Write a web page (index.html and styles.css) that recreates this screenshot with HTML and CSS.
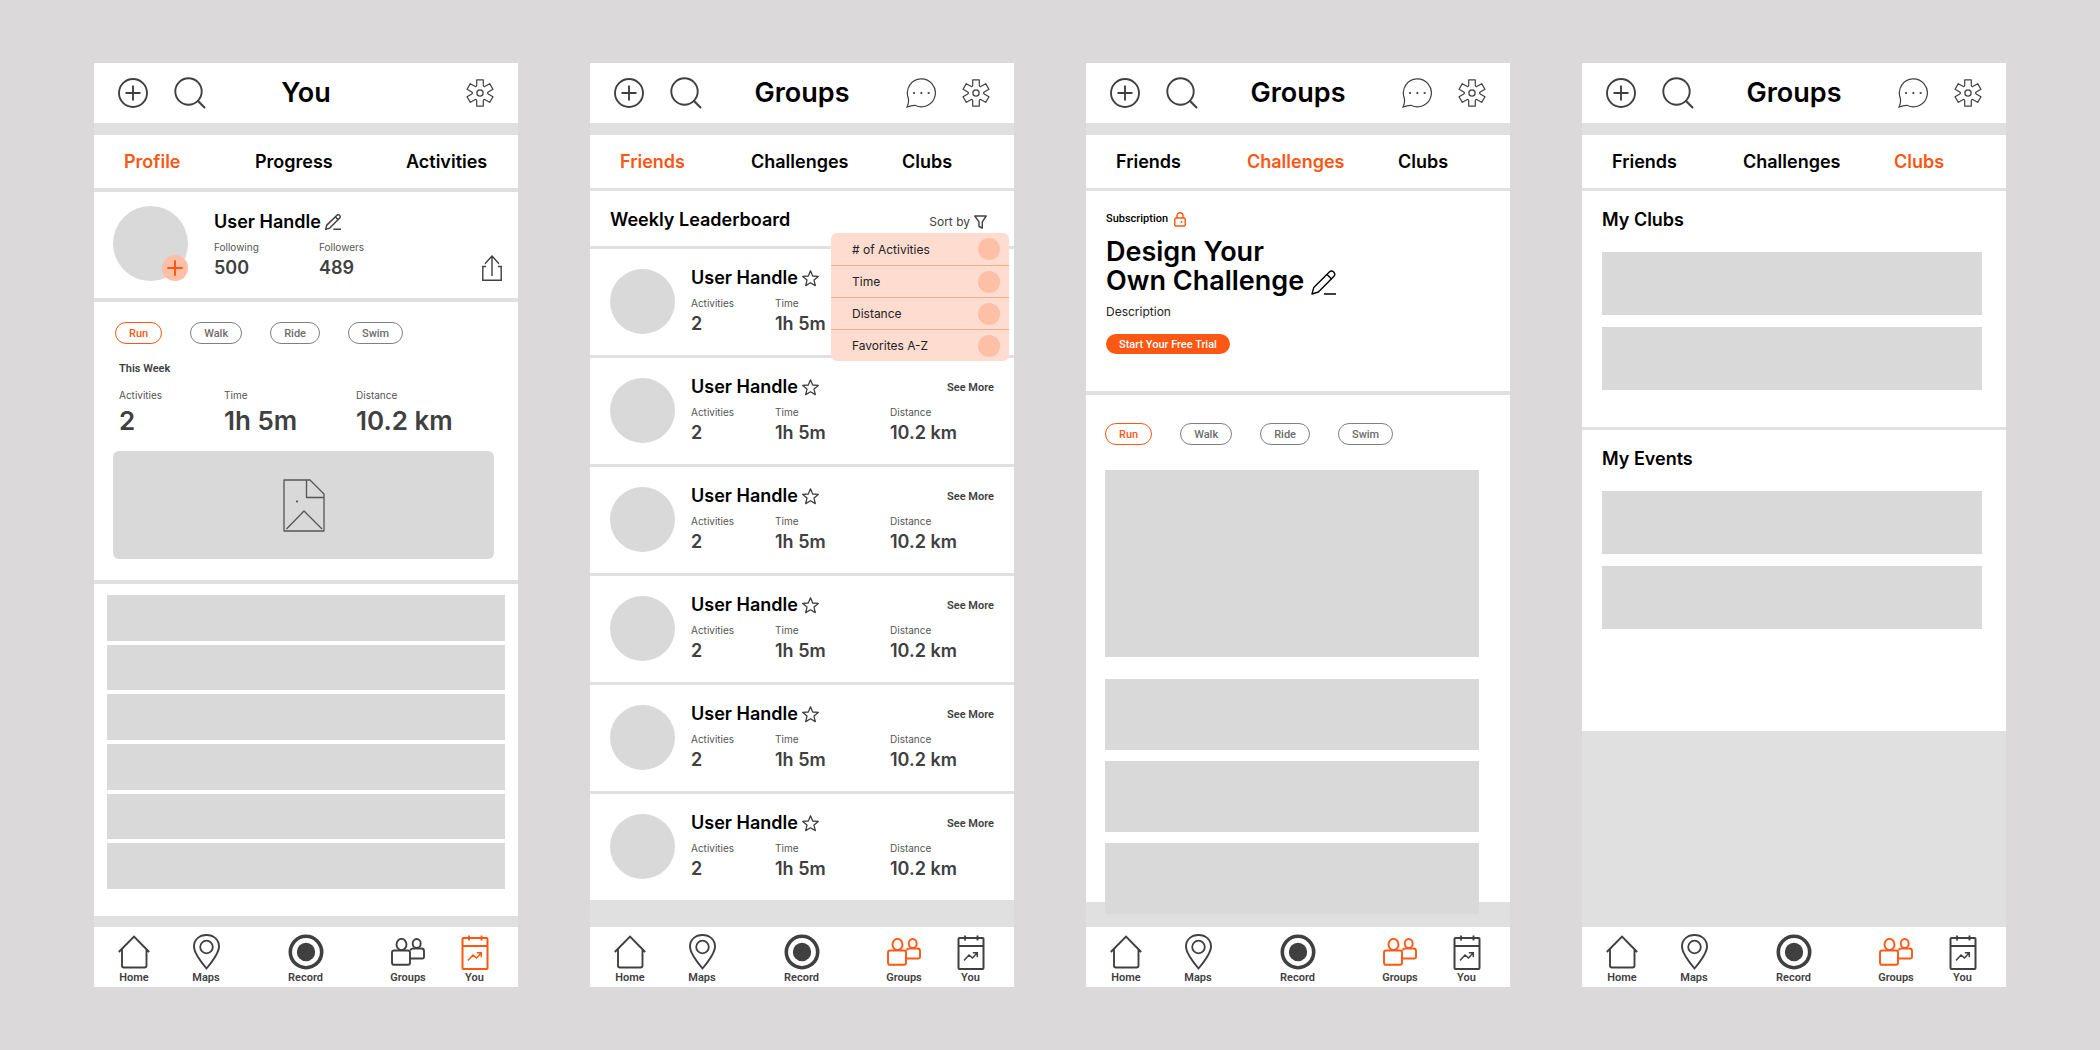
FILE: index.html
```html
<!DOCTYPE html>
<html lang="en">
  <head>
    <meta charset="UTF-8" />
    <meta name="viewport" content="width=device-width, initial-scale=1.0" />
    <title>Activity Tracker Screens</title>
    <link rel="stylesheet" href="styles.css">
  </head>
  <body>
    <!-- icon sprite -->
    <svg class="sprite" aria-hidden="true">
      <symbol id="i-add" viewBox="0 0 30 30">
        <circle cx="15" cy="15" r="14" stroke-width="1.9" />
        <path d="M15 7.5v15M7.5 15h15" stroke-width="1.9" />
      </symbol>
      <symbol id="i-search" viewBox="0 0 32 32">
        <circle cx="14.5" cy="14.5" r="13.2" stroke-width="1.9" />
        <path d="M23.5 23.5l7.5 7.5" stroke-width="2.1" />
      </symbol>
      <symbol id="i-chat" viewBox="0 0 30 30">
        <path d="M1 29Q3.5 24 2 19A14 14 0 1 1 9 27.3Q5 27.3 1 29Z" stroke-width="1.2" />
        <path d="M8 15h.1M15.3 15h.1M22.6 15h.1" stroke-width="2.2" stroke-linecap="round" />
      </symbol>
      <symbol id="i-gear" viewBox="-15 -15 30 30">
        <path d="M-3.5-14H3.5V-8.5Q3.7-6 6-7.4L10.4-10 13.9-4 9.2-1.3Q7 0 9.2 1.3L13.9 4 10.4 10 6 7.4Q3.7 6 3.5 8.5V14H-3.5V8.5Q-3.7 6-6 7.4L-10.4 10-13.9 4-9.2 1.3Q-7 0-9.2-1.3L-13.9-4-10.4-10-6-7.4Q-3.7-6-3.5-8.5Z" stroke-width="1.3" stroke-linejoin="round" />
        <circle r="3.3" stroke-width="1.4" />
      </symbol>
      <symbol id="i-edit" viewBox="0 0 25 25">
        <path d="M1 24l1.8-6.6L18.6 1.8a2.6 2.6 0 0 1 3.8 0l.6.6a2.6 2.6 0 0 1 0 3.8L7.4 22Z" stroke-linejoin="round" />
        <path d="M16 4.4l4.8 4.8M13 24h12" />
      </symbol>
      <symbol id="i-share" viewBox="0 0 20 26">
        <path d="M4 11.5H.8v13.8h18.4V11.5H16M10 21V1M3 8.7L10 1l7 7.7" stroke-width="1.4" />
      </symbol>
      <symbol id="i-image" viewBox="0 0 42 53">
        <path d="M1 1h26l14 14v37H1ZM23.5 1v17.5H41M3.5 50L21 32l18 18" stroke-width="1.3" stroke-linejoin="round" />
        <path d="M14 22.5h.1" stroke-width="2.2" stroke-linecap="round" />
      </symbol>
      <symbol id="i-star" viewBox="0 0 17 17">
        <path d="M8.5.8L10.7 6l5.6.4-4.3 3.7 1.3 5.5-4.8-2.9-4.8 2.9L5 10.1.7 6.4 6.3 6Z" stroke-width="1.3" stroke-linejoin="round" />
      </symbol>
      <symbol id="i-filter" viewBox="0 0 13 14">
        <path d="M.8 1h11.4L8.3 6.8V13L5 11.5V6.8Z" stroke-width="1.4" stroke-linejoin="round" />
      </symbol>
      <symbol id="i-lock" viewBox="0 0 12 15">
        <rect x=".8" y="6" width="10.4" height="8" rx="1" stroke-width="1.4" />
        <path d="M3 6V3.8a3 3 0 0 1 6 0V6" stroke-width="1.4" />
        <path d="M7.5 10h.1" stroke-width="1.8" stroke-linecap="round" />
      </symbol>
      <symbol id="i-home" viewBox="0 0 32 35">
        <path d="M.8 17L16 1.5 31.2 17M4 14v16.5q0 2 2 2h20.5q2 0 2-2V14" stroke-width="1.9" />
      </symbol>
      <symbol id="i-pin" viewBox="0 0 27 36">
        <path d="M13.5 34.5Q1 19.5 1 12.5C1 5.5 6.5 1 13.5 1S26 5.5 26 12.5q0 7-12.5 22Z" stroke-width="1.9" />
        <circle cx="13.5" cy="13" r="6.3" stroke-width="1.8" />
      </symbol>
      <symbol id="i-record" viewBox="0 0 36 36">
        <circle cx="18" cy="18" r="15.7" stroke-width="3.6" />
        <circle cx="18" cy="18" r="9.2" fill="currentColor" stroke="none" />
      </symbol>
      <symbol id="i-groups" viewBox="0 0 34 28">
        <ellipse cx="10.5" cy="6.5" rx="5" ry="5.6" stroke-width="1.9" />
        <ellipse cx="25.7" cy="5.5" rx="4" ry="4.5" stroke-width="1.9" />
        <rect x="1" y="12.5" width="18" height="14.3" rx="2" stroke-width="1.9" />
        <path d="M19 20.5h12.2q1.8 0 1.8-1.8v-5.7q0-2.5-2.5-2.5h-8.5q-2 0-2.7 2" stroke-width="1.9" />
      </symbol>
      <symbol id="i-you" viewBox="0 0 28 35">
        <rect x="1.5" y="3" width="25" height="31" rx="1" stroke-width="2" />
        <path d="M1.5 11h25M8 .5v5M20.5 .5v5" stroke-width="1.9" />
        <path d="M7 25.5l5-5.5 3.5 3 4.5-5M15.8 17.8h4.5v4.5" stroke-width="1.5" />
      </symbol>
    </svg>

    <main class="board">
      <!-- You / Profile -->
      <section class="phone">
        <header class="topbar">
          <div class="icons">
            <button aria-label="Add"><svg class="i30"><use href="#i-add" /></svg></button>
            <button aria-label="Search"><svg class="i32"><use href="#i-search" /></svg></button>
          </div>
          <h1>You</h1>
          <div class="icons right">
            <button aria-label="Settings"><svg class="i28"><use href="#i-gear" /></svg></button>
          </div>
        </header>
        <nav class="tabs">
          <a href="#" class="active">Profile</a>
          <a href="#">Progress</a>
          <a href="#">Activities</a>
        </nav>
        <div class="card profile thick">
          <div class="avatar big">
            <button class="badge" aria-label="Add photo">
              <svg viewBox="0 0 16 16"><path d="M8 1v14M1 8h14" stroke-width="1.9" stroke-linecap="round" /></svg>
            </button>
          </div>
          <div class="info">
            <h2>User Handle <svg class="edit-small"><use href="#i-edit" /></svg></h2>
            <div class="follow">
              <p class="stat"><span>Following</span><b>500</b></p>
              <p class="stat"><span>Followers</span><b>489</b></p>
            </div>
          </div>
          <button class="share" aria-label="Share"><svg><use href="#i-share" /></svg></button>
        </div>
        <div class="card week thick">
          <div class="pills">
            <button class="active">Run</button>
            <button>Walk</button>
            <button>Ride</button>
            <button>Swim</button>
          </div>
          <h3>This Week</h3>
          <div class="week-stats">
            <p class="stat large"><span>Activities</span><b>2</b></p>
            <p class="stat large"><span>Time</span><b>1h 5m</b></p>
            <p class="stat large"><span>Distance</span><b>10.2 km</b></p>
          </div>
          <div class="map"><svg><use href="#i-image" /></svg></div>
        </div>
        <div class="card feed thick">
          <div></div><div></div><div></div><div></div><div></div><div></div>
        </div>
        <nav class="bottom">
          <a href="#"><svg class="home"><use href="#i-home" /></svg>Home</a>
          <a href="#"><svg class="pin"><use href="#i-pin" /></svg>Maps</a>
          <a href="#"><svg class="rec"><use href="#i-record" /></svg>Record</a>
          <a href="#"><svg class="grp"><use href="#i-groups" /></svg>Groups</a>
          <a href="#" class="active"><svg class="you"><use href="#i-you" /></svg>You</a>
        </nav>
      </section>

      <!-- Groups / Friends -->
      <section class="phone">
        <header class="topbar">
          <div class="icons">
            <button aria-label="Add"><svg class="i30"><use href="#i-add" /></svg></button>
            <button aria-label="Search"><svg class="i32"><use href="#i-search" /></svg></button>
          </div>
          <h1>Groups</h1>
          <div class="icons right">
            <button aria-label="Messages"><svg class="i30"><use href="#i-chat" /></svg></button>
            <button aria-label="Settings"><svg class="i28"><use href="#i-gear" /></svg></button>
          </div>
        </header>
        <nav class="tabs">
          <a href="#" class="active">Friends</a>
          <a href="#">Challenges</a>
          <a href="#">Clubs</a>
        </nav>
        <div class="card leader-title">
          <h2>Weekly Leaderboard</h2>
          <button class="sort">Sort by <svg><use href="#i-filter" /></svg></button>
          <div class="sort-menu">
            <label># of Activities <input type="radio" name="sort" /></label>
            <label>Time <input type="radio" name="sort" /></label>
            <label>Distance <input type="radio" name="sort" /></label>
            <label>Favorites A-Z <input type="radio" name="sort" /></label>
          </div>
        </div>
        <div id="leaderboard"></div>
        <nav class="bottom">
          <a href="#"><svg class="home"><use href="#i-home" /></svg>Home</a>
          <a href="#"><svg class="pin"><use href="#i-pin" /></svg>Maps</a>
          <a href="#"><svg class="rec"><use href="#i-record" /></svg>Record</a>
          <a href="#" class="active"><svg class="grp"><use href="#i-groups" /></svg>Groups</a>
          <a href="#"><svg class="you"><use href="#i-you" /></svg>You</a>
        </nav>
      </section>

      <!-- Groups / Challenges -->
      <section class="phone">
        <header class="topbar">
          <div class="icons">
            <button aria-label="Add"><svg class="i30"><use href="#i-add" /></svg></button>
            <button aria-label="Search"><svg class="i32"><use href="#i-search" /></svg></button>
          </div>
          <h1>Groups</h1>
          <div class="icons right">
            <button aria-label="Messages"><svg class="i30"><use href="#i-chat" /></svg></button>
            <button aria-label="Settings"><svg class="i28"><use href="#i-gear" /></svg></button>
          </div>
        </header>
        <nav class="tabs">
          <a href="#">Friends</a>
          <a href="#" class="active">Challenges</a>
          <a href="#">Clubs</a>
        </nav>
        <div class="card promo">
          <p class="subscription">Subscription <svg><use href="#i-lock" /></svg></p>
          <h2>Design Your<br />Own Challenge <svg><use href="#i-edit" /></svg></h2>
          <p class="description">Description</p>
          <button class="trial">Start Your Free Trial</button>
        </div>
        <div class="card challenges thick">
          <div class="pills">
            <button class="active">Run</button>
            <button>Walk</button>
            <button>Ride</button>
            <button>Swim</button>
          </div>
          <div class="block hero"></div>
          <div class="block"></div>
          <div class="block"></div>
          <div class="block"></div>
        </div>
        <nav class="bottom">
          <a href="#"><svg class="home"><use href="#i-home" /></svg>Home</a>
          <a href="#"><svg class="pin"><use href="#i-pin" /></svg>Maps</a>
          <a href="#"><svg class="rec"><use href="#i-record" /></svg>Record</a>
          <a href="#" class="active"><svg class="grp"><use href="#i-groups" /></svg>Groups</a>
          <a href="#"><svg class="you"><use href="#i-you" /></svg>You</a>
        </nav>
      </section>

      <!-- Groups / Clubs -->
      <section class="phone">
        <header class="topbar">
          <div class="icons">
            <button aria-label="Add"><svg class="i30"><use href="#i-add" /></svg></button>
            <button aria-label="Search"><svg class="i32"><use href="#i-search" /></svg></button>
          </div>
          <h1>Groups</h1>
          <div class="icons right">
            <button aria-label="Messages"><svg class="i30"><use href="#i-chat" /></svg></button>
            <button aria-label="Settings"><svg class="i28"><use href="#i-gear" /></svg></button>
          </div>
        </header>
        <nav class="tabs">
          <a href="#">Friends</a>
          <a href="#">Challenges</a>
          <a href="#" class="active">Clubs</a>
        </nav>
        <div class="card clubs">
          <h2>My Clubs</h2>
          <div class="block"></div>
          <div class="block"></div>
        </div>
        <div class="card clubs events">
          <h2>My Events</h2>
          <div class="block"></div>
          <div class="block"></div>
        </div>
        <nav class="bottom">
          <a href="#"><svg class="home"><use href="#i-home" /></svg>Home</a>
          <a href="#"><svg class="pin"><use href="#i-pin" /></svg>Maps</a>
          <a href="#"><svg class="rec"><use href="#i-record" /></svg>Record</a>
          <a href="#" class="active"><svg class="grp"><use href="#i-groups" /></svg>Groups</a>
          <a href="#"><svg class="you"><use href="#i-you" /></svg>You</a>
        </nav>
      </section>
    </main>

    <script>
      const friends = Array.from({ length: 6 }, () => ({
        name: "User Handle",
        activities: "2",
        time: "1h 5m",
        distance: "10.2 km",
      }));

      const board = document.getElementById("leaderboard");

      friends.forEach((f) => {
        const row = document.createElement("div");
        row.className = "card friend";
        row.innerHTML = `
          <div class="avatar"></div>
          <div class="info">
            <div class="name-row">
              <h2>${f.name} <svg class="star"><use href="#i-star" /></svg></h2>
              <a href="#">See More</a>
            </div>
            <div class="friend-stats">
              <p class="stat"><span>Activities</span><b>${f.activities}</b></p>
              <p class="stat"><span>Time</span><b>${f.time}</b></p>
              <p class="stat"><span>Distance</span><b>${f.distance}</b></p>
            </div>
          </div>`;
        board.appendChild(row);
      });
    </script>
  </body>
</html>
```

FILE: styles.css
```css
* {
  box-sizing: border-box;
}
body {
  margin: 0;
  background: #dcd9da;
  font-family: "Inter", sans-serif;
  color: #000;
}
h1,
h2,
h3,
p {
  margin: 0;
}
a {
  color: inherit;
  text-decoration: none;
}
button {
  padding: 0;
  border: none;
  background: none;
  font-family: inherit;
  color: inherit;
  cursor: pointer;
}
svg {
  display: block;
  fill: none;
  stroke: currentColor;
}
.sprite {
  position: absolute;
  width: 0;
  height: 0;
}

/* screens */
.board {
  display: grid;
  grid-template-columns: repeat(4, 1fr);
  gap: 72px;
  padding: 63px 94px;
}
.phone {
  display: flex;
  flex-direction: column;
  min-height: calc(100vh - 126px);
  background: #e0e0e0;
}
.card {
  background: #fff;
  margin-top: 3px;
}
.card.thick {
  margin-top: 4px;
}
h2 {
  display: flex;
  align-items: center;
  gap: 4px;
  font-size: 18px;
  line-height: 24px;
  font-weight: 600;
}

/* top bar */
.topbar {
  display: grid;
  grid-template-columns: 1fr auto 1fr;
  align-items: center;
  height: 60px;
  padding: 0 24px;
  background: #fff;
}
.topbar h1 {
  font-size: 27px;
  line-height: 32px;
  font-weight: 600;
}
.icons {
  display: flex;
  align-items: center;
  gap: 26px;
  color: #404041;
}
.icons.right {
  justify-content: flex-end;
}
.i28 {
  width: 28px;
  height: 30px;
}
.i30 {
  width: 30px;
  height: 30px;
}
.i32 {
  width: 32px;
  height: 32px;
}
.tabs {
  display: grid;
  grid-template-columns: 131fr 151fr 112fr;
  align-items: center;
  height: 53px;
  margin-top: 12px;
  padding-left: 30px;
  background: #fff;
  font-size: 18px;
  line-height: 24px;
  font-weight: 600;
}
.tabs .active {
  color: #fc5713;
}

/* avatar, name and numbers */
.avatar {
  flex: none;
  width: 65px;
  height: 65px;
  border-radius: 50%;
  background: #d9d9d9;
}
.avatar.big {
  position: relative;
  width: 75px;
  height: 75px;
}
.badge {
  position: absolute;
  right: 0;
  bottom: 0;
  display: grid;
  place-items: center;
  width: 26px;
  height: 26px;
  border-radius: 50%;
  background: #ffbea6;
  color: #fc5713;
}
.badge svg {
  width: 16px;
  height: 16px;
}
.info {
  flex: 1;
}
.stat {
  color: #404041;
}
.stat span,
.stat b {
  display: block;
}
.stat span {
  font-size: 10px;
  line-height: 14px;
  color: #555;
}
.stat b {
  margin-top: 2px;
  font-size: 18px;
  line-height: 24px;
  font-weight: 600;
}
.stat.large b {
  font-size: 26px;
  line-height: 34px;
}

/* profile */
.profile {
  display: flex;
  gap: 26px;
  padding: 14px 16px 0 19px;
  height: 106px;
}
.profile .info {
  padding-top: 4px;
}
.edit-small {
  width: 16px;
  height: 16px;
  stroke-width: 2.3;
  color: #404041;
}
.follow {
  display: grid;
  grid-template-columns: 105fr 137fr;
  margin-top: 6px;
}
.profile .share {
  align-self: flex-end;
  margin-bottom: 17px;
  color: #404041;
}
.share svg {
  width: 20px;
  height: 26px;
}
.pills {
  display: flex;
  gap: 28px;
}
.pills button {
  height: 22px;
  padding: 0 13px;
  border: 1px solid #808080;
  border-radius: 11px;
  font-family: "Roboto", sans-serif;
  font-size: 11px;
  font-weight: 500;
  color: #6d6d6d;
}
.pills .active {
  border-color: #fc5713;
  color: #fc5713;
}
.week {
  padding: 20px 24px 21px 19px;
}
.week .pills {
  padding-left: 2px;
}
.week h3 {
  margin: 17px 0 11px 6px;
  font-family: "Roboto", sans-serif;
  font-size: 11px;
  line-height: 16px;
  font-weight: 600;
  color: #404041;
}
.week-stats {
  display: grid;
  grid-template-columns: 105fr 132fr 138fr;
  padding-left: 6px;
}
.map {
  display: grid;
  place-items: center;
  height: 108px;
  margin-top: 13px;
  border-radius: 6px;
  background: #d9d9d9;
  color: #555;
}
.map svg {
  width: 42px;
  height: 53px;
}
.feed {
  display: grid;
  grid-template-rows: repeat(6, 1fr);
  gap: 4px;
  height: 332px;
  padding: 11px 13px 27px;
}
.feed div {
  background: #d9d9d9;
}

/* leaderboard */
.leader-title {
  position: relative;
  display: flex;
  justify-content: space-between;
  align-items: flex-start;
  height: 55px;
  padding: 17px 27px 0 20px;
}
.sort {
  display: flex;
  align-items: center;
  gap: 4px;
  padding-top: 4px;
  font-size: 12px;
  line-height: 20px;
  color: #404041;
}
.sort svg {
  width: 13px;
  height: 14px;
}
.sort-menu {
  position: absolute;
  top: 42px;
  right: 5px;
  width: 178px;
  border-radius: 6px;
  background: #fedccf;
  font-size: 12px;
  color: #222;
}
.sort-menu label {
  display: flex;
  align-items: center;
  justify-content: space-between;
  height: 32px;
  padding: 0 9px 0 21px;
}
.sort-menu label + label {
  border-top: 1px solid #f9ab8f;
}
.sort-menu input {
  appearance: none;
  width: 22px;
  height: 22px;
  margin: 0;
  border-radius: 50%;
  background: #febfa7;
}
.friend {
  display: flex;
  gap: 16px;
  height: 106px;
  padding: 20px 20px 0;
}
.friend .info {
  margin-top: -3px;
}
.name-row {
  display: flex;
  justify-content: space-between;
  align-items: center;
}
.name-row a {
  font-family: "Roboto", sans-serif;
  font-size: 11px;
  font-weight: 600;
  color: #404041;
}
.star {
  width: 17px;
  height: 17px;
  color: #404041;
}
.friend-stats {
  display: grid;
  grid-template-columns: 84fr 115fr 104fr;
  margin-top: 6px;
}
/* the open sort menu covers this part of the first row */
.friend:first-child .name-row a,
.friend:first-child .stat:last-child {
  visibility: hidden;
}

/* challenges */
.promo {
  padding: 20px 20px 37px;
}
.subscription {
  display: flex;
  align-items: center;
  gap: 6px;
  font-family: "Roboto", sans-serif;
  font-size: 11px;
  line-height: 16px;
  font-weight: 500;
}
.subscription svg {
  width: 12px;
  height: 15px;
  color: #fc5713;
}
.promo h2 {
  display: block;
  margin-top: 10px;
  font-size: 27px;
  line-height: 29px;
}
.promo h2 svg {
  display: inline-block;
  width: 25px;
  height: 25px;
  stroke-width: 1.4;
  vertical-align: bottom;
}
.description {
  margin-top: 9px;
  font-size: 12px;
  line-height: 16px;
  color: #222;
}
.trial {
  height: 20px;
  margin-top: 14px;
  padding: 0 13px;
  border-radius: 10px;
  background: #fc5713;
  color: #fff;
  font-family: "Roboto", sans-serif;
  font-size: 11px;
  font-weight: 500;
}
.challenges {
  padding: 28px 31px 0 19px;
}
.block {
  height: 71px;
  margin-top: 11px;
  background: #d9d9d9;
}
.hero {
  height: 187px;
  margin: 25px 0 22px;
}
/* the last block runs past the card */
.challenges .block:last-child {
  margin-bottom: -12px;
}

/* clubs */
.clubs {
  padding: 17px 24px 37px 20px;
}
.clubs h2 {
  margin-bottom: 20px;
}
.clubs .block {
  height: 63px;
  margin-top: 12px;
}
.events {
  padding-bottom: 102px;
}

/* bottom navigation */
.bottom {
  display: grid;
  grid-template-columns: 72fr 72fr 127fr 78fr 55fr;
  height: 60px;
  margin-top: auto;
  padding: 6px 16px 2px 4px;
  background: #fff;
}
.bottom a {
  display: flex;
  flex-direction: column;
  align-items: center;
  justify-content: flex-end;
  font-family: "Roboto", sans-serif;
  font-size: 11px;
  line-height: 15px;
  font-weight: 600;
  color: #404041;
}
.bottom .active svg {
  color: #fc5713;
}
.home {
  width: 32px;
  height: 35px;
}
.pin {
  width: 27px;
  height: 36px;
}
.rec {
  width: 36px;
  height: 36px;
}
.grp {
  width: 34px;
  height: 28px;
  margin-bottom: 4px;
}
.you {
  width: 28px;
  height: 35px;
}
```
